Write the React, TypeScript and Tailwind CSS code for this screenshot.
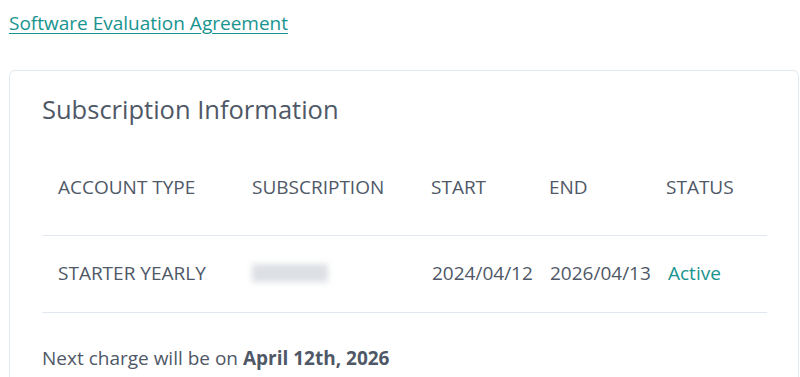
import React from 'react';

// Rows for the subscription table
interface SubscriptionRow {
  accountType: string;
  start: string;
  end: string;
  status: string;
}

const rows: SubscriptionRow[] = [
  { accountType: 'STARTER YEARLY', start: '2024/04/12', end: '2026/04/13', status: 'Active' },
];

const columns = [
  { label: 'ACCOUNT TYPE', width: 'w-[194px]' },
  { label: 'SUBSCRIPTION', width: 'w-[179px]' },
  { label: 'START', width: 'w-[118px]' },
  { label: 'END', width: 'w-[117px]' },
  { label: 'STATUS', width: 'w-[117px]' },
];

const App: React.FC = () => {
  return (
    <div className="min-h-[377px] bg-white px-[9px] pt-[10px] font-['Open_Sans',sans-serif] text-[#4f5867]">
      <a href="#" className="text-[19px] leading-[26px] text-[#17948f] underline underline-offset-[3px]">
        Software Evaluation Agreement
      </a>

      <div className="mt-[34px] w-[790px] rounded-md border border-[#e2e8f0] px-[32px] pt-[20px] pb-6">
        <h2 className="text-[25.5px] leading-[36px] text-[#4f5867]">Subscription Information</h2>

        <table className="mt-[16px] w-[725px] table-fixed border-collapse text-[19px] leading-[26px]">
          <thead>
            <tr className="border-b border-[#e2e8f0]">
              {columns.map((col) => (
                <th key={col.label} className={`${col.width} px-4 pt-[31px] pb-[35px] text-left font-normal`}>
                  {col.label}
                </th>
              ))}
            </tr>
          </thead>
          <tbody>
            {rows.map((row) => (
              <tr key={row.accountType} className="border-b border-[#e2e8f0]">
                <td className="px-4 pt-[24px] pb-[26px] whitespace-nowrap">{row.accountType}</td>
                <td className="px-4 pt-[24px] pb-[26px]">
                  {/* blurred-out subscription id */}
                  <div className="h-[18px] w-[76px] bg-[#dcdfe4] blur-[3px]" />
                </td>
                <td className="pl-[17px] pt-[24px] pb-[26px] whitespace-nowrap">{row.start}</td>
                <td className="pl-[17px] pt-[24px] pb-[26px] whitespace-nowrap">{row.end}</td>
                <td className="pl-[18px] pt-[24px] pb-[26px] text-[#17948f]">{row.status}</td>
              </tr>
            ))}
          </tbody>
        </table>

        <p className="mt-[32px] text-[19px] leading-[26px]">
          Next charge will be on <span className="font-bold">April 12th, 2026</span>
        </p>
      </div>
    </div>
  );
};

export default App;
